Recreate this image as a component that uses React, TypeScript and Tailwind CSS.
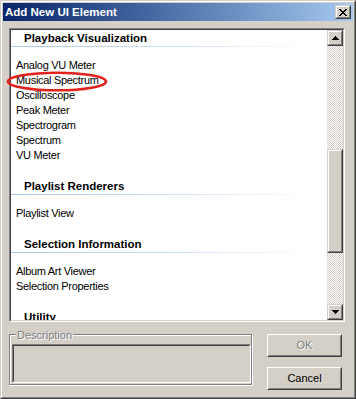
import React from "react";

// Win2000-style "Add New UI Element" dialog

const groups = [
  {
    title: "Playback Visualization",
    items: [
      "Analog VU Meter",
      "Musical Spectrum",
      "Oscilloscope",
      "Peak Meter",
      "Spectrogram",
      "Spectrum",
      "VU Meter",
    ],
  },
  { title: "Playlist Renderers", items: ["Playlist View"] },
  {
    title: "Selection Information",
    items: ["Album Art Viewer", "Selection Properties"],
  },
  { title: "Utility", items: [] as string[] },
];

// raised 3d box (scrollbar buttons, thumb)
const Raised = ({
  className = "",
  children,
}: {
  className?: string;
  children?: React.ReactNode;
}) => (
  <div
    className={`border border-t-[#d4d0c8] border-l-[#d4d0c8] border-r-[#404040] border-b-[#404040] ${className}`}
  >
    <div className="w-full h-full border border-t-white border-l-white border-r-[#808080] border-b-[#808080] bg-[#d4d0c8] flex items-center justify-center">
      {children}
    </div>
  </div>
);

const PushButton = ({
  label,
  disabled,
}: {
  label: string;
  disabled?: boolean;
}) => (
  <div className="w-[75px] h-[23px] border border-t-white border-l-white border-r-[#404040] border-b-[#404040]">
    <div
      className={`w-full h-full border border-t-[#d4d0c8] border-l-[#d4d0c8] border-r-[#808080] border-b-[#808080] flex items-center justify-center text-[11px] leading-[13px] ${
        disabled ? "text-[#808080] [text-shadow:1px_1px_0_#fff]" : "text-black"
      }`}
    >
      {label}
    </div>
  </div>
);

const ArrowUp = () => (
  <svg width="7" height="4" viewBox="0 0 7 4" shapeRendering="crispEdges">
    <path d="M3 0h1v1h1v1h1v1h1v1H0V3h1V2h1V1h1z" fill="#000" />
  </svg>
);

const ArrowDown = () => (
  <svg width="7" height="4" viewBox="0 0 7 4" shapeRendering="crispEdges">
    <path d="M0 0h7v1H6v1H5v1H4v1H3V3H2V2H1V1H0z" fill="#000" />
  </svg>
);

const CloseGlyph = () => (
  <svg width="8" height="7" viewBox="0 0 8 7" shapeRendering="crispEdges">
    <path
      d="M0 0h2v1H0zM6 0h2v1H6zM1 1h2v1H1zM5 1h2v1H5zM2 2h4v1H2zM3 3h2v1H3zM2 4h4v1H2zM1 5h2v1H1zM5 5h2v1H5zM0 6h2v1H0zM6 6h2v1H6z"
      fill="#000"
    />
  </svg>
);

export default function App() {
  return (
    <div className="relative w-[356px] h-[399px] bg-[#d4d0c8] border border-t-[#d4d0c8] border-l-[#d4d0c8] border-r-[#404040] border-b-[#404040] font-['Liberation_Sans',Arial,sans-serif] select-none">
      <div className="h-full border border-t-white border-l-white border-r-[#808080] border-b-[#808080] p-px flex flex-col">
        {/* Title bar */}
        <div className="h-[18px] shrink-0 flex items-center justify-between pl-[2px] pr-[2px] bg-linear-to-r from-[#0a246a] to-[#a6caf0]">
          <span className="text-white font-bold text-[11.5px] leading-[14px]">
            Add New UI Element
          </span>
          <Raised className="w-[16px] h-[14px]">
            <CloseGlyph />
          </Raised>
        </div>

        {/* Body */}
        <div className="flex-1 pl-[6px] pt-[7px]">
          {/* List box */}
          <div className="w-[336px] h-[294px] border border-t-[#808080] border-l-[#808080] border-r-white border-b-white">
            <div className="w-full h-full border border-t-[#404040] border-l-[#404040] border-r-[#d4d0c8] border-b-[#d4d0c8] bg-white flex">
              <div className="flex-1 overflow-hidden">
                {groups.map((g, gi) => (
                  <div key={g.title} className={gi > 0 ? "mt-[15px]" : ""}>
                    <div className="h-[16px] pl-[13px] font-bold text-[11.5px] leading-[16px] text-black">
                      {g.title}
                    </div>
                    <div className="h-px bg-linear-to-r from-[#a6c6ee] via-[#d8e6f8] via-60% to-white to-95%" />
                    {g.items.length > 0 && (
                      <div className="pt-[11px]">
                        {g.items.map((it) => (
                          <div
                            key={it}
                            className="h-[15px] pl-[5px] text-[11px] leading-[15px] tracking-[-0.3px] text-black"
                          >
                            {it}
                          </div>
                        ))}
                      </div>
                    )}
                  </div>
                ))}
              </div>

              {/* Scrollbar */}
              <div className="w-[16px] h-full flex flex-col">
                <Raised className="w-[16px] h-[16px] shrink-0">
                  <ArrowUp />
                </Raised>
                <div className="flex-1 flex flex-col bg-[repeating-conic-gradient(#d4d0c8_0%_25%,#ffffff_0%_50%)] bg-[length:2px_2px]">
                  <div className="h-[103px] shrink-0" />
                  <Raised className="w-[16px] h-[104px] shrink-0" />
                </div>
                <Raised className="w-[16px] h-[16px] shrink-0">
                  <ArrowDown />
                </Raised>
              </div>
            </div>
          </div>

          {/* Bottom row */}
          <div className="mt-[12px] flex items-start gap-[15px]">
            <div className="relative w-[243px] h-[51px] border border-[#808080] shadow-[1px_1px_0_#fff,inset_1px_1px_0_#fff]">
              <span className="absolute left-[6px] top-[-6px] px-px bg-[#d4d0c8] text-[11px] leading-[12px] text-[#808080] [text-shadow:1px_1px_0_#fff]">
                Description
              </span>
              <div className="ml-[2px] mt-[9px] w-[239px] h-[39px] border border-t-[#808080] border-l-[#808080] border-r-white border-b-white">
                <div className="w-full h-full border border-t-[#404040] border-l-[#404040] border-r-[#d4d0c8] border-b-[#d4d0c8] bg-[#d4d0c8]" />
              </div>
            </div>
            <div className="flex flex-col gap-[10px]">
              <PushButton label="OK" disabled />
              <PushButton label="Cancel" />
            </div>
          </div>
        </div>
      </div>

      {/* red annotation circle */}
      <svg
        className="absolute left-[4px] top-[69px] pointer-events-none"
        width="104"
        height="23"
        viewBox="0 0 104 23"
      >
        <ellipse
          cx="52"
          cy="11.5"
          rx="49"
          ry="8.8"
          fill="none"
          stroke="#e3221b"
          strokeWidth="2.6"
        />
      </svg>
    </div>
  );
}
